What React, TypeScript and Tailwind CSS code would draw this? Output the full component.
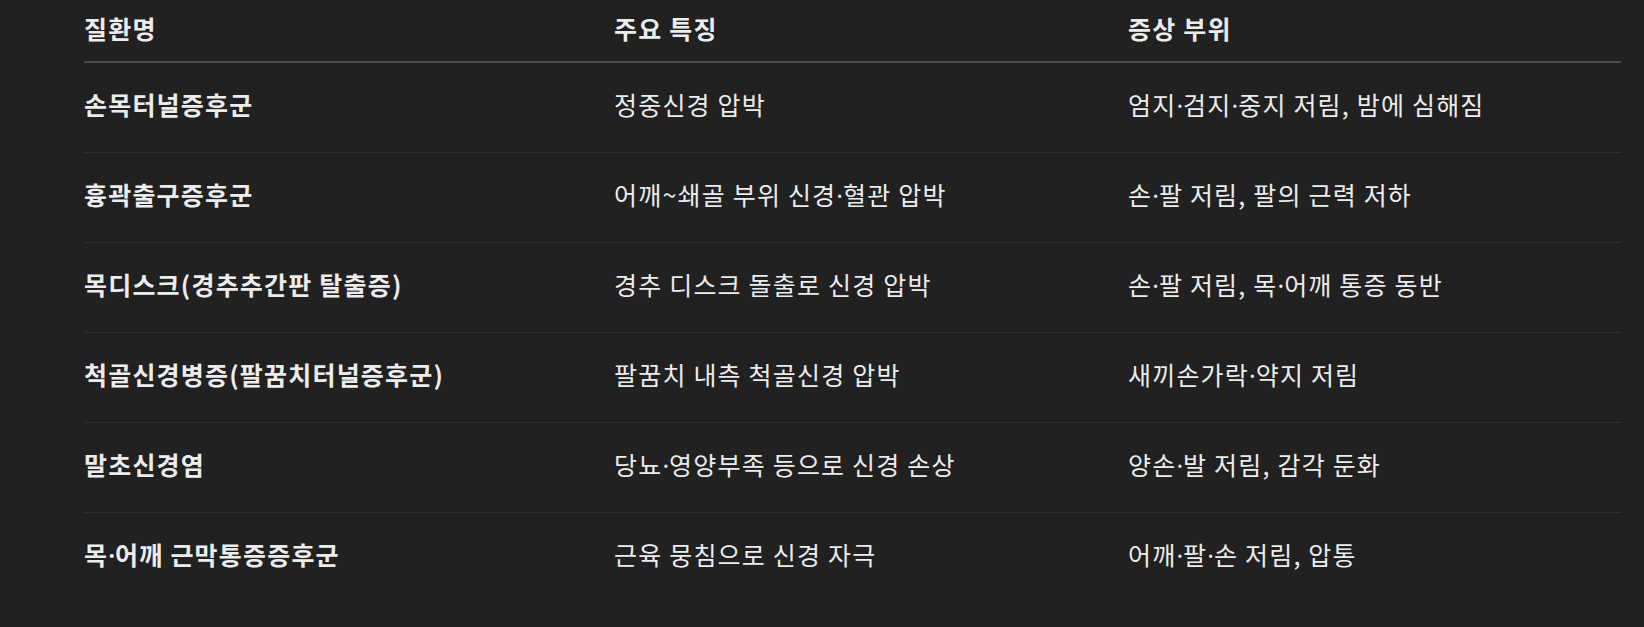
const rows: [string, string, string][] = [
  ['손목터널증후군', '정중신경 압박', '엄지·검지·중지 저림, 밤에 심해짐'],
  ['흉곽출구증후군', '어깨~쇄골 부위 신경·혈관 압박', '손·팔 저림, 팔의 근력 저하'],
  ['목디스크(경추추간판 탈출증)', '경추 디스크 돌출로 신경 압박', '손·팔 저림, 목·어깨 통증 동반'],
  ['척골신경병증(팔꿈치터널증후군)', '팔꿈치 내측 척골신경 압박', '새끼손가락·약지 저림'],
  ['말초신경염', '당뇨·영양부족 등으로 신경 손상', '양손·발 저림, 감각 둔화'],
  ['목·어깨 근막통증증후군', '근육 뭉침으로 신경 자극', '어깨·팔·손 저림, 압통'],
];

// the CJK font draws "·" full-width; the reference has a narrow dot
function Txt({ s }: { s: string }) {
  const parts = s.split('·');
  return (
    <>
      {parts.map((p, i) => (
        <span key={i}>
          {i > 0 && <span className="font-['Noto_Sans'] leading-[0] tracking-normal">·</span>}
          {p}
        </span>
      ))}
    </>
  );
}

export default function App() {
  return (
    <div
      className="min-h-[627px] w-full bg-[#212121] text-[#ececec]"
      style={{ fontFamily: '"Noto Sans CJK KR", "Noto Sans", sans-serif' }}
    >
      <table className="ml-[84px] w-[1537px] table-fixed border-collapse text-[25px] tracking-[1.2px]">
        <colgroup>
          <col className="w-[530px]" />
          <col className="w-[514px]" />
          <col />
        </colgroup>
        <thead>
          <tr className="border-b-2 border-[#4a4a4a]">
            <th className="pt-[10px] pb-[15px] text-left align-middle font-semibold leading-9">질환명</th>
            <th className="pt-[10px] pb-[15px] text-left align-middle font-semibold leading-9">주요 특징</th>
            <th className="pt-[10px] pb-[15px] text-left align-middle font-semibold leading-9">증상 부위</th>
          </tr>
        </thead>
        <tbody>
          {rows.map((r, i) => (
            <tr key={r[0]} className={i < rows.length - 1 ? 'border-b border-[#303030]' : ''}>
              <td className="h-[89px] pt-[23px] pb-[29px] align-top font-semibold leading-[37px]">
                <Txt s={r[0]} />
              </td>
              <td className="h-[89px] pt-[23px] pb-[29px] align-top leading-[37px]">
                <Txt s={r[1]} />
              </td>
              <td className="h-[89px] pt-[23px] pb-[29px] align-top leading-[37px]">
                <Txt s={r[2]} />
              </td>
            </tr>
          ))}
        </tbody>
      </table>
    </div>
  );
}
